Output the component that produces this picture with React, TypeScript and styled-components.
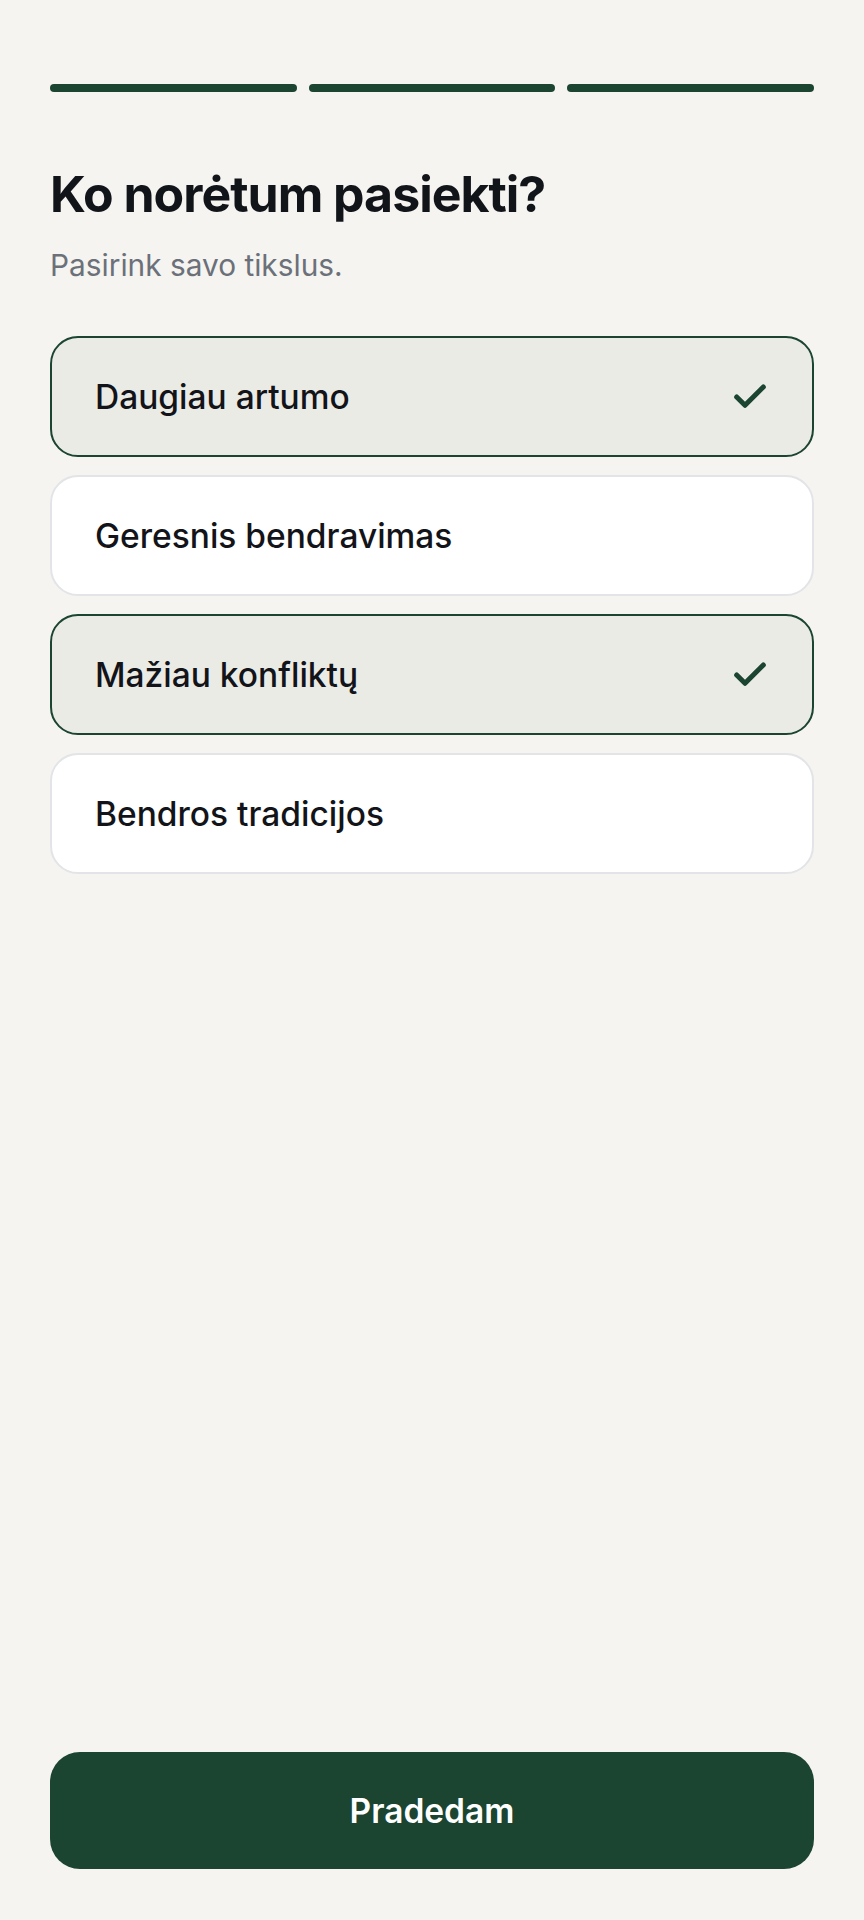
import React, { useState } from "react";
import styled, { createGlobalStyle } from "styled-components";

const GlobalStyle = createGlobalStyle`
  html, body { margin: 0; padding: 0; background: #f5f4f0; }
  body { font-family: Inter, "Noto Sans", sans-serif; -webkit-font-smoothing: antialiased; }
  * { box-sizing: border-box; }
`;

const Page = styled.div`
  min-height: 1920px;
  display: flex;
  flex-direction: column;
  padding: 84px 50px 51px;
  background: #f5f4f0;
`;

const Progress = styled.div`
  display: grid;
  grid-template-columns: repeat(3, 1fr);
  gap: 12px;
`;

const Segment = styled.div<{ $active: boolean }>`
  height: 8px;
  border-radius: 4px;
  background: ${(p) => (p.$active ? "#1b4431" : "#dcdcd6")};
`;

const Title = styled.h1`
  margin: 72px 0 0;
  font-size: 50px;
  line-height: 60px;
  font-weight: 700;
  letter-spacing: -0.02em;
  color: #111418;
`;

const Subtitle = styled.p`
  margin: 21px 0 0;
  font-size: 29.8px;
  line-height: 40px;
  font-weight: 400;
  color: #6b7079;
`;

const Options = styled.div`
  margin-top: 51px;
  display: flex;
  flex-direction: column;
  gap: 18px;
`;

const Option = styled.button<{ $selected: boolean }>`
  display: flex;
  align-items: center;
  justify-content: space-between;
  height: 121px;
  padding: 0 42px 0 43px;
  border-radius: 28px;
  border: 2px solid ${(p) => (p.$selected ? "#1b4431" : "#e2e4e7")};
  background: ${(p) => (p.$selected ? "#ebebe6" : "#ffffff")};
  font-family: Inter, "Noto Sans", sans-serif;
  font-size: 33.5px;
  font-weight: 500;
  color: #121419;
  text-align: left;
  cursor: pointer;
`;

const Spacer = styled.div`
  flex: 1;
`;

const Primary = styled.button`
  height: 117px;
  border: none;
  border-radius: 30px;
  background: #1b4431;
  color: #ffffff;
  font-family: Inter, "Noto Sans", sans-serif;
  font-size: 33.5px;
  font-weight: 600;
  cursor: pointer;
`;

const Check = () => (
  <svg width="40" height="40" viewBox="0 0 24 24" fill="none" stroke="#1b4431" strokeWidth="3" strokeLinecap="round" strokeLinejoin="round">
    <path d="M20 6 9 17l-5-5" />
  </svg>
);

const goals = ["Daugiau artumo", "Geresnis bendravimas", "Mažiau konfliktų", "Bendros tradicijos"];

export default function App() {
  const [selected, setSelected] = useState<string[]>(["Daugiau artumo", "Mažiau konfliktų"]);
  const toggle = (g: string) =>
    setSelected((s) => (s.includes(g) ? s.filter((x) => x !== g) : [...s, g]));
  return (
    <>
      <GlobalStyle />
      <Page>
        <Progress>
          <Segment $active />
          <Segment $active />
          <Segment $active />
        </Progress>
        <Title>Ko norėtum pasiekti?</Title>
        <Subtitle>Pasirink savo tikslus.</Subtitle>
        <Options>
          {goals.map((g) => (
            <Option key={g} $selected={selected.includes(g)} onClick={() => toggle(g)}>
              <span>{g}</span>
              {selected.includes(g) && <Check />}
            </Option>
          ))}
        </Options>
        <Spacer />
        <Primary>Pradedam</Primary>
      </Page>
    </>
  );
}
